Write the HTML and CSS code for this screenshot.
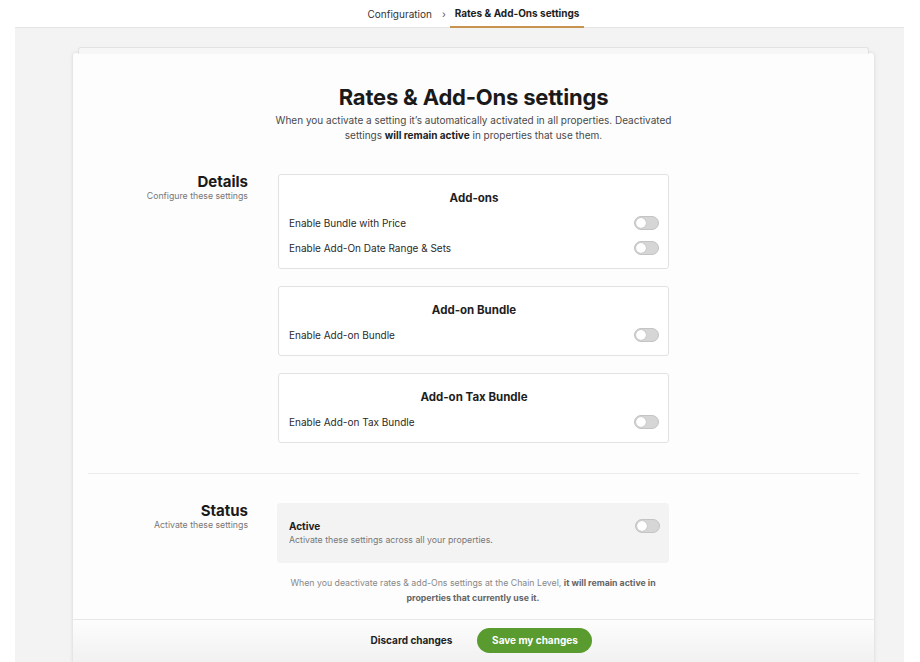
FILE: index.html
```html
<!DOCTYPE html>
<html lang="en">
<head>
<meta charset="utf-8">
<title>Rates &amp; Add-Ons settings</title>
<link rel="stylesheet" href="styles.css">
</head>
<body>
<div class="app">
  <header class="topbar">
    <nav class="crumbs">
      <span class="crumb">Configuration</span>
      <span class="sep">›</span>
      <span class="crumb current">Rates &amp; Add-Ons settings</span>
    </nav>
  </header>

  <main class="card">
    <div class="intro">
      <h1 class="title">Rates &amp; Add-Ons settings</h1>
      <p class="lead">When you activate a setting it’s automatically activated in all properties. Deactivated<br>settings <b>will remain active</b> in properties that use them.</p>
    </div>

    <section class="section details">
      <div class="label">
        <h2 class="label-title">Details</h2>
        <p class="label-sub">Configure these settings</p>
      </div>
      <div class="panels">
        <div class="panel">
          <h3 class="panel-title">Add-ons</h3>
          <div class="row"><span>Enable Bundle with Price</span><span class="toggle"></span></div>
          <div class="row"><span>Enable Add-On Date Range &amp; Sets</span><span class="toggle"></span></div>
        </div>
        <div class="panel">
          <h3 class="panel-title">Add-on Bundle</h3>
          <div class="row"><span>Enable Add-on Bundle</span><span class="toggle"></span></div>
        </div>
        <div class="panel">
          <h3 class="panel-title">Add-on Tax Bundle</h3>
          <div class="row"><span>Enable Add-on Tax Bundle</span><span class="toggle"></span></div>
        </div>
      </div>
    </section>

    <hr class="divider">

    <section class="section status">
      <div class="label">
        <h2 class="label-title">Status</h2>
        <p class="label-sub">Activate these settings</p>
      </div>
      <div class="status-col">
        <div class="status-box">
          <div class="status-text">
            <div class="status-name">Active</div>
            <div class="status-desc">Activate these settings across all your properties.</div>
          </div>
          <span class="toggle"></span>
        </div>
        <p class="note">When you deactivate rates &amp; add-Ons settings at the Chain Level, <b>it will remain active in</b><br><b>properties that currently use it.</b></p>
      </div>
    </section>

    <footer class="actions">
      <button class="btn-link" type="button">Discard changes</button>
      <button class="btn-save" type="button">Save my changes</button>
    </footer>
  </main>
</div>
</body>
</html>
```

FILE: styles.css
```css
* { box-sizing: border-box; }
html, body { margin: 0; padding: 0; }
body {
  background: #ffffff;
  font-family: Inter, "Noto Sans", sans-serif;
  color: #1e1e1e;
  height: 662px;
  overflow: hidden;
}
.app {
  margin: 0 16px 0 15px;
  background: #f3f3f3;
  min-height: 662px;
}
.topbar {
  height: 28px;
  background: #ffffff;
  border-bottom: 1px solid #e4e4e4;
  padding: 0 30px 0 58px;
  display: flex;
  justify-content: center;
  align-items: stretch;
}
.crumbs {
  display: flex;
  align-items: stretch;
  gap: 7px;
  font-size: 10px;
  color: #333;
  margin-left: 5px;
}
.crumb { display: flex; align-items: center; }
.sep { display: flex; align-items: center; font-size: 10px; color: #555; margin: 0 -3px 0 3px; }
.crumb.current {
  font-weight: 700;
  color: #1e1e1e;
  padding: 0 5px;
  border-bottom: 2px solid #c8924f;
  margin-bottom: -1px;
}

.card {
  position: relative;
  margin: 25px 30px 0 58px;
  background: #fdfdfd;
  border-radius: 3px 3px 0 0;
  box-shadow: 0 0 4px rgba(0,0,0,0.12), 0 1px 1px rgba(0,0,0,0.06);
  padding-top: 30px;
}
.card::before {
  content: "";
  position: absolute;
  left: 5px;
  right: 5px;
  top: -6px;
  height: 6px;
  background: #f7f7f7;
  border: 1px solid #e2e2e2;
  border-bottom: none;
  border-radius: 3px 3px 0 0;
}

.intro { text-align: center; }
.title {
  margin: 0;
  font-size: 22px;
  line-height: 28px;
  font-weight: 700;
  letter-spacing: -0.2px;
  color: #1a1a1a;
}
.lead {
  margin: 2px 0 0;
  font-size: 10px;
  line-height: 15px;
  color: #4a4a4a;
}
.lead b { color: #222; font-weight: 700; }

.section {
  display: grid;
  grid-template-columns: 175px 391px;
  column-gap: 30px;
}
.details { margin-top: 31px; }
.label { text-align: right; margin-top: -1px; }
.label-title {
  margin: 0;
  font-size: 15px;
  line-height: 18px;
  font-weight: 700;
  color: #1a1a1a;
}
.label-sub {
  margin: 0;
  font-size: 8.75px;
  line-height: 11px;
  color: #777;
}

.panels { display: flex; flex-direction: column; gap: 17px; }
.panel {
  background: #ffffff;
  border: 1px solid #e2e2e2;
  border-radius: 3px;
  padding: 15px 9px 8px 10px;
}
.panel-title {
  margin: 0 0 4px;
  text-align: center;
  font-size: 11.5px;
  line-height: 16px;
  font-weight: 700;
  color: #1e1e1e;
}
.row {
  height: 25px;
  display: flex;
  align-items: center;
  justify-content: space-between;
  font-size: 10px;
  color: #2a2a2a;
}

.toggle {
  position: relative;
  width: 25px;
  height: 14px;
  border-radius: 7px;
  background: #d6d6d6;
  border: 1px solid #c4c4c4;
  flex: none;
}
.toggle::after {
  content: "";
  position: absolute;
  left: 1px;
  top: 1px;
  width: 10px;
  height: 10px;
  border-radius: 50%;
  background: #ffffff;
  box-shadow: 0 0 1px rgba(0,0,0,0.3);
}

.divider {
  margin: 30px 15px 0;
  border: 0;
  border-top: 1px solid #ececec;
  height: 0;
}

.status { margin-top: 29px; }
.status-col { margin-left: -1px; width: 392px; }
.status-box {
  background: #f3f3f3;
  border-radius: 4px;
  padding: 16px 9px 16px 12px;
  display: flex;
  justify-content: space-between;
  align-items: flex-start;
}
.status-name {
  font-size: 10px;
  line-height: 14px;
  font-weight: 700;
  color: #1e1e1e;
}
.status-desc {
  font-size: 8.75px;
  line-height: 14px;
  color: #777;
}
.note {
  margin: 13px auto 0;
  width: 390px;
  text-align: center;
  font-size: 8.75px;
  line-height: 15px;
  color: #888;
}
.note b { color: #666; font-weight: 700; }

.actions {
  margin-top: 13px;
  border-top: 1px solid #e8e8e8;
  height: 50px;
  display: flex;
  justify-content: center;
  align-items: center;
  gap: 25px;
  padding-bottom: 9px;
  padding-left: 16px;
  background: linear-gradient(#fdfdfd, #efefef);
}
.btn-link {
  border: 0;
  background: none;
  font-family: inherit;
  font-size: 10px;
  font-weight: 700;
  color: #1e1e1e;
  padding: 0;
}
.btn-save {
  border: 0;
  height: 25px;
  width: 115px;
  border-radius: 13px;
  background: #5a9b2f;
  color: #ffffff;
  font-family: inherit;
  font-size: 10px;
  font-weight: 700;
}
```
